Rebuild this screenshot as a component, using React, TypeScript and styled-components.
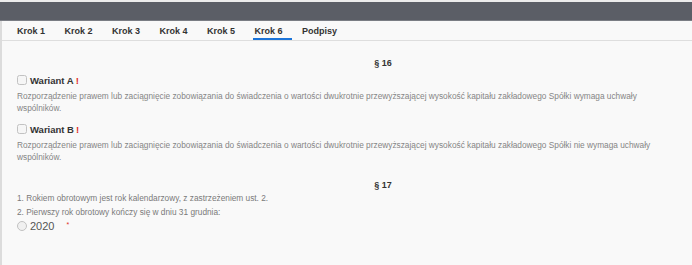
import React from 'react'
import styled, { createGlobalStyle } from 'styled-components'

const GlobalStyle = createGlobalStyle`
  html, body {
    margin: 0;
    padding: 0;
    background: #f9f9f9;
    font-family: 'Liberation Sans', Arial, sans-serif;
  }
`

const tabs = ['Krok 1', 'Krok 2', 'Krok 3', 'Krok 4', 'Krok 5', 'Krok 6', 'Podpisy']

const variants = [
  {
    label: 'Wariant A',
    text: 'Rozporządzenie prawem lub zaciągnięcie zobowiązania do świadczenia o wartości dwukrotnie przewyższającej wysokość kapitału zakładowego Spółki wymaga uchwały wspólników.',
  },
  {
    label: 'Wariant B',
    text: 'Rozporządzenie prawem lub zaciągnięcie zobowiązania do świadczenia o wartości dwukrotnie przewyższającej wysokość kapitału zakładowego Spółki nie wymaga uchwały wspólników.',
  },
]

const App = () => {
  return (
    <Page>
      <GlobalStyle />
      <TopBar />
      <Body>
        <TabBar>
          {tabs.map((t) => (
            <Tab key={t} $active={t === 'Krok 6'}>
              {t}
            </Tab>
          ))}
        </TabBar>

        <Content>
          <Paragraph $top={16}>§ 16</Paragraph>

          {variants.map((v) => (
            <Variant key={v.label}>
              <VariantHead>
                <Checkbox />
                {v.label}
                <Bang>!</Bang>
              </VariantHead>
              <Description>{v.text}</Description>
            </Variant>
          ))}

          <Paragraph $top={16}>§ 17</Paragraph>
          <Points>
            <li>1. Rokiem obrotowym jest rok kalendarzowy, z zastrzeżeniem ust. 2.</li>
            <li>2. Pierwszy rok obrotowy kończy się w dniu 31 grudnia:</li>
          </Points>
          <RadioRow>
            <Radio />
            2020
            <Required>*</Required>
          </RadioRow>
        </Content>
      </Body>
    </Page>
  )
}

export default App

const Page = styled.div`
  width: 692px;
  height: 265px;
  overflow: hidden;
  padding-top: 2px;
  box-sizing: border-box;
  background: #ececec;
`

const TopBar = styled.div`
  height: 19px;
  background: #5b5e66;
  border-bottom: 1px solid #7a7d84;
  box-sizing: border-box;
`

const Body = styled.div`
  height: 244px;
  background: #f9f9f9;
  border-left: 2px solid #dcdcdc;
`

const TabBar = styled.div`
  display: flex;
  align-items: stretch;
  height: 19px;
  padding-left: 13px;
  border-bottom: 1px solid #dedede;
`

const Tab = styled.div<{ $active?: boolean }>`
  display: flex;
  align-items: center;
  padding: 1px 9px 0 2px;
  margin-right: 8.5px;
  font-size: 9px;
  font-weight: 700;
  color: #333;
  box-shadow: ${(p) => (p.$active ? 'inset 0 -2px 0 #1b74d9' : 'none')};
`

const Content = styled.div`
  padding: 0 15px;
`

const Paragraph = styled.div<{ $top?: number }>`
  margin-top: ${(p) => p.$top ?? 17}px;
  padding-left: 72px;
  text-align: center;
  font-size: 9px;
  font-weight: 700;
  color: #333;
  line-height: 12px;
`

const Variant = styled.div`
  margin-top: 4px;

  & + & {
    margin-top: 8px;
  }
`

const VariantHead = styled.div`
  display: flex;
  align-items: center;
  height: 14px;
  font-size: 9.5px;
  font-weight: 700;
  color: #333;
`

const Checkbox = styled.span`
  width: 8px;
  height: 8px;
  border: 1px solid #c2c2c2;
  border-radius: 2.5px;
  background: #f6f6f6;
  margin-right: 3px;
`

const Bang = styled.span`
  margin-left: 2px;
  color: #e0302a;
  font-weight: 700;
`

const Description = styled.p`
  margin: 3px 0 0;
  padding-right: 24px;
  font-size: 8.3px;
  line-height: 12px;
  color: #858585;
`

const Points = styled.ul`
  list-style: none;
  margin: 0;
  padding: 0;
  font-size: 8.3px;
  line-height: 14px;
  color: #7a7a7a;
`

const RadioRow = styled.div`
  display: flex;
  align-items: center;
  height: 14px;
  font-size: 11px;
  color: #555;
`

const Radio = styled.span`
  width: 8px;
  height: 8px;
  border: 1px solid #c2c2c2;
  border-radius: 50%;
  background: #f0f0f0;
  margin-right: 3px;
`

const Required = styled.span`
  align-self: flex-start;
  margin: 2px 0 0 12px;
  font-size: 7px;
  line-height: 8px;
  color: #e0302a;
`
